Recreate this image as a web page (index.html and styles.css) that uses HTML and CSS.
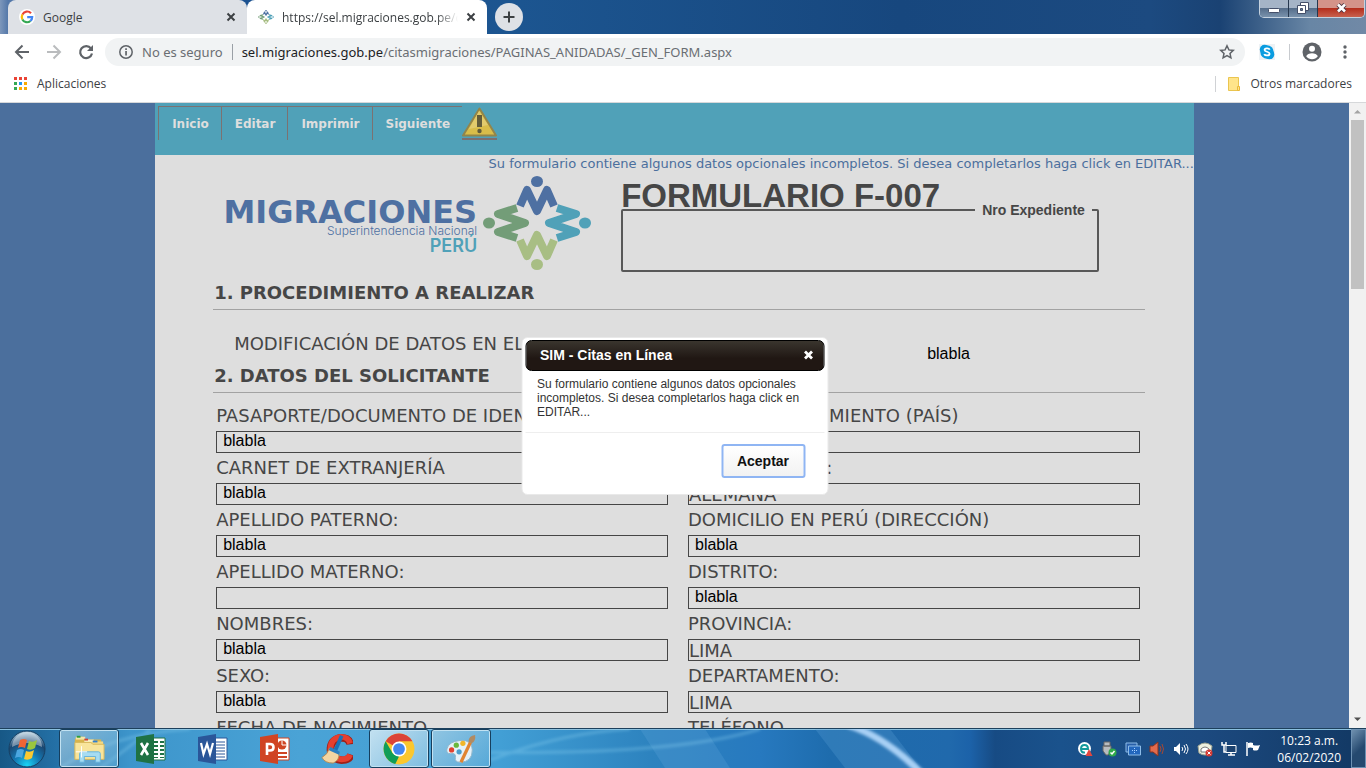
FILE: index.html
```html
<!DOCTYPE html>
<html lang="es">
<head>
<meta charset="utf-8">
<title>SIM - Citas en Línea</title>
<link rel="stylesheet" href="styles.css">
</head>
<body>
<header class="browser">
  <div class="tabstrip">
    <div class="tab">
      <svg class="favicon" viewBox="0 0 16 16"><circle cx="8" cy="8" r="8" fill="#fff"/><g fill="none" stroke-width="2.2"><path d="M12 4.2A5.2 5.2 0 0 0 3.4 5.6" stroke="#ea4335"/><path d="M3.4 5.6a5.2 5.2 0 0 0 0 4.8" stroke="#fbbc05"/><path d="M3.4 10.4a5.2 5.2 0 0 0 8 1.6" stroke="#34a853"/><path d="M11.4 12a5 5 0 0 0 1.8-3.9H8.2" stroke="#4285f4"/></g></svg>
      <span class="tab-title">Google</span>
      <button class="tab-close" aria-label="Cerrar pestaña"><svg viewBox="0 0 10 10"><path d="M1.5 1.5l7 7M8.500 1.500l-7 7"/></svg></button>
    </div>
    <div class="tab active">
      <svg class="favicon" viewBox="0 0 108 94"><use href="#emblem"/></svg>
      <span class="tab-title fade">https://sel.migraciones.gob.pe/citas</span>
      <button class="tab-close" aria-label="Cerrar pestaña"><svg viewBox="0 0 10 10"><path d="M1.5 1.5l7 7M8.500 1.500l-7 7"/></svg></button>
    </div>
    <button class="new-tab" aria-label="Nueva pestaña"><svg viewBox="0 0 14 14"><path d="M7 1.500v11M1.500 7h11" stroke="#3c4043" stroke-width="2"/></svg></button>
    <div class="window-controls">
      <button aria-label="Minimizar"><svg viewBox="0 0 28 18"><rect x="8.500" y="8.500" width="11" height="4" rx="1" fill="#fff" stroke="#45506a"/></svg></button>
      <button aria-label="Restaurar"><svg viewBox="0 0 28 18"><g fill="#fff" stroke="#45506a"><path d="M11.500 2.500h8v8h-8z"/><path d="M8.500 5.500h8v8h-8z"/><path d="M11.500 8.500h2v2h-2z" fill="#68819b"/></g></svg></button>
      <button class="close" aria-label="Cerrar"><svg viewBox="0 0 46 18"><path d="M20 4.500l7 7M27 4.500l-7 7" stroke="#4a3440" stroke-width="4.500"/><path d="M20 4.500l7 7M27 4.500l-7 7" stroke="#fff" stroke-width="2.600"/></svg></button>
    </div>
  </div>
  <div class="toolbar">
    <button class="nav" aria-label="Atrás"><svg viewBox="0 0 16 16"><path d="M15 8H2.500M8.500 1.500L2 8l6.500 6.500" fill="none" stroke="#5f6368" stroke-width="2"/></svg></button>
    <button class="nav" aria-label="Adelante"><svg viewBox="0 0 16 16"><path d="M1 8h12.500M7.500 1.500L14 8l-6.500 6.500" fill="none" stroke="#babcbe" stroke-width="2"/></svg></button>
    <button class="nav" aria-label="Recargar"><svg viewBox="0 0 16 16"><path d="M13 4.500A6 6 0 1 0 14 9.500" fill="none" stroke="#5f6368" stroke-width="2.200"/><path d="M15 1v6H9z" fill="#5f6368"/></svg></button>
    <div class="omnibox">
      <svg class="i16" viewBox="0 0 16 16"><circle cx="8" cy="8" r="6.200" fill="none" stroke="#5f6368" stroke-width="1.500"/><path d="M7.200 7h1.700v4.500H7.200zM7.200 4.300h1.700V6H7.200z" fill="#5f6368"/></svg>
      <span class="secure">No es seguro</span>
      <span class="url" role="textbox" aria-label="Dirección"><b>sel.migraciones.gob.pe</b>/citasmigraciones/PAGINAS_ANIDADAS/_GEN_FORM.aspx</span>
      <button class="star" aria-label="Añadir a marcadores"><svg class="i16" viewBox="0 0 16 16"><path d="M8 1.800l1.900 4.100 4.400.5-3.300 3 .9 4.400L8 11.600l-3.900 2.200.9-4.400-3.300-3 4.400-.5z" fill="none" stroke="#5f6368" stroke-width="1.500"/></svg></button>
    </div>
    <button class="skype" aria-label="Skype"><svg class="i16" viewBox="0 0 16 16"><path d="M0 0h16v16H0z" fill="#eef2f5"/><circle cx="5.500" cy="5.500" r="4.700" fill="#0a9ce0"/><circle cx="10.500" cy="10.500" r="4.800" fill="#0a9ce0"/><circle cx="8" cy="8" r="6.700" fill="#0a9ce0"/><path d="M10.800 5.600C9.800 3.700 5.500 4 5.600 6c.1 2.200 5 1.300 5 3.700 0 2.200-4.500 2.300-5.400.4" fill="none" stroke="#fff" stroke-width="1.800"/></svg></button>
    <i class="divider"></i>
    <button class="profile" aria-label="Perfil"><svg viewBox="0 0 20 20"><circle cx="10" cy="10" r="9.500" fill="#5f6368"/><circle cx="10" cy="6.700" r="3" fill="#fff"/><path d="M4.200 14.200c1.300-4 10.300-4 11.600 0-2.500 4-9 4-11.600 0z" fill="#fff"/></svg></button>
    <button class="more" aria-label="Menú"><svg viewBox="0 0 4 14"><g fill="#5f6368"><circle cx="2" cy="2" r="1.700"/><circle cx="2" cy="7" r="1.700"/><circle cx="2" cy="12" r="1.700"/></g></svg></button>
  </div>
  <nav class="bookmarks">
    <a href="#"><svg class="apps" viewBox="0 0 13 13"><path d="M0 0h3v3H0zM5 0h3v3H5zM10 0h3v3h-3z" fill="#ea4335"/><path d="M0 5h3v3H0zM0 10h3v3H0z" fill="#34a853"/><path d="M5 5h3v3H5z" fill="#2196f3"/><path d="M10 5h3v3h-3zM5 10h3v3H5zM10 10h3v3h-3z" fill="#f9ab00"/></svg>Aplicaciones</a>
    <a href="#" class="others"><svg class="folder" viewBox="0 0 12 14"><path d="M.5.5h10v13H.5z" fill="#ffe48a" stroke="#eac54f"/><path d="M9.500 9.500h2v4h-2z" fill="#ffe48a" stroke="#eab83a"/></svg>Otros marcadores</a>
  </nav>
</header>

<main class="viewport">
  <div class="backdrop">
    <div class="page">
      <nav class="menu">
        <a href="#">Inicio</a><a href="#">Editar</a><a href="#">Imprimir</a><a href="#">Siguiente</a>
        <span class="warning"><svg viewBox="0 0 35 30"><path d="M17.500 1.500L34 28.500H1z" fill="#d9bd49" stroke="#92854a" stroke-width="2" stroke-linejoin="round"/><path d="M17 4l9 14L7 22z" fill="#e6d17d" opacity=".7"/><path d="M15 8h5v12h-5z" fill="#625c3a"/><circle cx="17.500" cy="24" r="2.200" fill="#625c3a"/></svg></span>
      </nav>
      <p class="notice">Su formulario contiene algunos datos opcionales incompletos. Si desea completarlos haga click en EDITAR...</p>
      <div class="sheet">
        <div class="masthead">
          <div class="brand">
            <strong>MIGRACIONES</strong>
            <span>Superintendencia Nacional</span>
            <em>PERÚ</em>
          </div>
          <svg class="emblem" viewBox="0 0 108 94">
            <g id="emblem">
              <g fill="none" stroke-width="8" stroke-linejoin="round">
                <path d="M37 30L44 14L54 35L64 14L71 30" stroke="#4e70a2"/>
                <path d="M37 64L44 80L54 59L64 80L71 64" stroke="#a8be84"/>
                <path d="M34 32L15 38L42 47L15 56L34 62" stroke="#739d78"/>
                <path d="M74 32L93 38L66 47L93 56L74 62" stroke="#50a1b8"/>
              </g>
              <ellipse cx="54" cy="5.500" rx="6" ry="5.500" fill="#4e70a2"/><ellipse cx="54" cy="88.500" rx="6" ry="5.500" fill="#a8be84"/><ellipse cx="6" cy="47" rx="6" ry="5.500" fill="#739d78"/><ellipse cx="102" cy="47" rx="6" ry="5.500" fill="#50a1b8"/>
            </g>
          </svg>
          <div class="form-id">
            <h1>FORMULARIO F-007</h1>
            <fieldset><legend>Nro Expediente</legend></fieldset>
          </div>
        </div>
        <h2>1. PROCEDIMIENTO A REALIZAR</h2>
        <div class="procedure"><span>MODIFICACIÓN DE DATOS EN EL RCE</span><span class="reason">blabla</span></div>
        <h2>2. DATOS DEL SOLICITANTE</h2>
        <form class="fields">
          <label>PASAPORTE/DOCUMENTO DE IDENTIDAD<input value="blabla"></label>
          <label>LUGAR DE NACIMIENTO (PAÍS)<input value=""></label>
          <label>CARNET DE EXTRANJERÍA<input value="blabla"></label>
          <label>NACIONALIDAD:<input class="fixed" value="ALEMANA"></label>
          <label>APELLIDO PATERNO:<input value="blabla"></label>
          <label>DOMICILIO EN PERÚ (DIRECCIÓN)<input value="blabla"></label>
          <label>APELLIDO MATERNO:<input value=""></label>
          <label>DISTRITO:<input value="blabla"></label>
          <label>NOMBRES:<input value="blabla"></label>
          <label>PROVINCIA:<input class="fixed" value="LIMA"></label>
          <label>SEXO:<input value="blabla"></label>
          <label>DEPARTAMENTO:<input class="fixed" value="LIMA"></label>
          <label>FECHA DE NACIMIENTO<input value=""></label>
          <label>TELÉFONO<input value=""></label>
        </form>
      </div>
    </div>
    <section class="dialog" role="dialog" aria-labelledby="dialog-title">
      <div class="dialog-head"><span id="dialog-title">SIM - Citas en Línea</span><button aria-label="Cerrar"><svg viewBox="0 0 10 10"><path d="M1.500 1.500l7 7M8.500 1.500l-7 7" stroke="#fff" stroke-width="2.800"/></svg></button></div>
      <p>Su formulario contiene algunos datos opcionales incompletos. Si desea completarlos haga click en EDITAR...</p>
      <div class="dialog-foot"><button>Aceptar</button></div>
    </section>
  </div>
  <div class="scrollbar">
    <svg viewBox="0 0 17 17"><path d="M5 10.500h7L8.500 7z" fill="#a3a3a3"/></svg>
    <div class="thumb"></div>
    <svg viewBox="0 0 17 17"><path d="M5 6.500h7L8.500 10z" fill="#505050"/></svg>
  </div>
</main>

<footer class="taskbar">
  <svg class="wallpaper" viewBox="0 0 1366 40" preserveAspectRatio="none">
    <defs><filter id="soft"><feGaussianBlur stdDeviation="1.500"/></filter></defs>
    <path d="M640 0h65l25 40h-65zM815 0h75l30 40h-75z" fill="#62a8dd" opacity=".25"/>
    <path d="M490 32Q560 4 630 0M490 24Q680 26 760 0M60 40Q110 5 190 0M100 40Q135 15 150 0" fill="none" stroke="#8bd0f0" stroke-width="3" opacity=".35" filter="url(#soft)"/>
    <path d="M848-4Q885 8 922 46" fill="none" stroke="#a8d0f5" stroke-width="7" filter="url(#soft)"/>
  </svg>
  <button class="start" aria-label="Inicio"><svg viewBox="0 0 38 38"><defs><radialGradient id="orb" cx=".5" cy=".95" r=".9"><stop offset="0" stop-color="#18d5f5"/><stop offset=".4" stop-color="#1479b4"/><stop offset=".75" stop-color="#1b4771"/><stop offset="1" stop-color="#9cbbd0"/></radialGradient></defs><circle cx="19" cy="19" r="18" fill="url(#orb)" stroke="#173f62"/><path d="M4 17a15 15 0 0 1 30 0q-15-8-30 0z" fill="#fff" opacity=".4"/><path d="M12 10q4-2 7 0l-2 8q-4-2-7 0z" fill="#ee6534"/><path d="M21 11q4 2 8-1l-2 8q-4 3-8 1z" fill="#9ac63e"/><path d="M9 20q4-2 7 0l-2 8q-3-2-7 0z" fill="#4ba7e0"/><path d="M18 21q4 2 8-1l-2 8q-4 3-8 1z" fill="#fbc931"/></svg></button>
  <button class="task open" aria-label="Explorador"><svg viewBox="0 0 34 34"><path d="M2 7l2-3h7l1 3h18v20H2z" fill="#d9b44c"/><path d="M3 4h10v3H3z" fill="#f3e5a6"/><path d="M4 3h4v2H4z" fill="#2e9e3d"/><path d="M12 7h10v3H12z" fill="#faf0c0"/><path d="M12 6h4v2h-4z" fill="#d23f32"/><path d="M20 9h12v18H20z" fill="#f3d983"/><path d="M21 8h5v2h-5z" fill="#2f7fd2"/><path d="M2 10h17l2 2h12v16H2z" fill="#f8e49b" stroke="#d8b85a"/><path d="M7 31v-9q0-2 2-2h18q2 0 2 2v9h-5v-6H12v6z" fill="#a6dcf2" stroke="#63b1dc"/><path d="M9 14v12M3 20h12" stroke="#fff"/></svg></button>
  <button class="task" aria-label="Excel"><svg viewBox="0 0 32 32"><path d="M17 5h13v22H17z" fill="#fff" stroke="#1f7244"/><path d="M19 8h4v2h-4zM25 8h4v2h-4zM19 12h4v2h-4zM25 12h4v2h-4zM19 16h4v2h-4zM25 16h4v2h-4zM19 20h4v2h-4zM25 20h4v2h-4zM19 24h4v1h-4zM25 24h4v1h-4z" fill="#1f7244"/><path d="M1 4l18-3v30L1 28z" fill="#1f7244"/><path d="M6 10l7 12M13 10L6 22" stroke="#fff" stroke-width="2.600"/></svg></button>
  <button class="task" aria-label="Word"><svg viewBox="0 0 32 32"><path d="M17 5h13v22H17z" fill="#fff" stroke="#2a5699"/><path d="M19 9h9M19 12h9M19 15h9M19 18h9M19 21h9M19 24h9" stroke="#2a5699"/><path d="M1 4l18-3v30L1 28z" fill="#2a5699"/><path d="M4 10l2.500 11L10 11l3 10 3-11" fill="none" stroke="#fff" stroke-width="2.200"/></svg></button>
  <button class="task" aria-label="PowerPoint"><svg viewBox="0 0 32 32"><path d="M17 5h13v22H17z" fill="#fff" stroke="#d04423"/><circle cx="23" cy="12" r="4.500" fill="#d04423"/><path d="M23 12V7.500M23 12h5" stroke="#fff"/><path d="M19 20h9M19 24h9" stroke="#d04423" stroke-width="2"/><path d="M1 4l18-3v30L1 28z" fill="#d04423"/><path d="M8 22V11h3q3.500 0 3.500 3.200T11 17.500H8" fill="none" stroke="#fff" stroke-width="2.600"/></svg></button>
  <button class="task" aria-label="CCleaner"><svg viewBox="0 0 34 34"><path d="M31 12Q30 5 21 5 10 7 10 18q1 10 12 11 8 0 10-6" fill="none" stroke="#9e2119" stroke-width="8"/><path d="M31 11Q29 4 21 4 10 6 10 17q1 10 12 11 7 0 9-5" fill="none" stroke="#e63f2f" stroke-width="6"/><path d="M22 3l-7 16" stroke="#1971b8" stroke-width="4"/><path d="M9 16l10 5q1 8-6 11Q4 32 1 26q6-3 8-10z" fill="#f3d5a2" stroke="#b88a50"/><path d="M10 15l10 5-1 3-11-5z" fill="#2d7fc0"/></svg></button>
  <button class="task open current" aria-label="Chrome"><svg viewBox="0 0 30 30"><circle cx="15" cy="15" r="14.500" fill="#fbc72e"/><path d="M15 15L2.500 7.700A14.500 14.500 0 0 1 27.600 7.700H15z" fill="#db4437"/><path d="M2.500 7.700L9 19l6 3-3.500 7A14.500 14.500 0 0 1 2.500 7.700z" fill="#109d58"/><circle cx="15" cy="15" r="7" fill="#fff"/><circle cx="15" cy="15" r="5.500" fill="#4487f0"/></svg></button>
  <button class="task open" aria-label="Paint"><svg viewBox="0 0 34 34"><path d="M16 8q13-1 13 10 0 13-13 13-6 0-5-5t-5-4q-5 0-4-5 2-8 14-9z" fill="#e5f1f8" stroke="#8fb4c9"/><circle cx="7" cy="18" r="2.800" fill="#e2412f"/><circle cx="12" cy="13" r="2.800" fill="#69b83d"/><circle cx="19" cy="11" r="2.800" fill="#f1b629"/><circle cx="15" cy="20" r="2.800" fill="#4a9dcb"/><path d="M27 10L17 31" stroke="#e28430" stroke-width="3.500"/><path d="M25 9q0-6 7-7 1 7-4 9z" fill="#b18b63"/></svg></button>
  <div class="tray">
    <svg viewBox="0 0 16 16"><circle cx="7.500" cy="7.500" r="6.500" fill="#fff"/><path d="M4 8h7q0-4-3.500-4T4 8t4 3.500" fill="none" stroke="#159a9c" stroke-width="2"/><path d="M12 8l3.500 7h-7z" fill="#e5453d"/></svg>
    <svg viewBox="0 0 16 16"><path d="M3 1h6v4H3zM2 5h8v5l-3 4H5l-3-4z" fill="#b8bcc0" stroke="#666"/><circle cx="11.500" cy="11.500" r="4" fill="#2fa84a"/><path d="M9.500 11.500l1.500 1.500 2.500-3" fill="none" stroke="#fff" stroke-width="1.500"/></svg>
    <svg viewBox="0 0 16 16"><path d="M1 2h11v9H1z" fill="#285fa8" stroke="#8dbce8"/><path d="M3.500 5h12v9h-12z" fill="#2367bd" stroke="#8dbce8"/><path d="M7 9.500h5M9.500 7v5" stroke="#a9d0ff" stroke-dasharray="1 1"/></svg>
    <svg viewBox="0 0 16 16"><path d="M1 5h3l5-4v14L4 11H1z" fill="#e26b4d" stroke="#8b321f"/><path d="M11 5q2 3 0 6M13 3q3 5 0 10" fill="none" stroke="#a64733"/></svg>
    <svg viewBox="0 0 16 16"><path d="M1 6h2l4-4v12l-4-4H1z" fill="#fff"/><path d="M9 6q1.500 2 0 4M11 4q3 4 0 8M13 3q4 5 0 10" fill="none" stroke="#fff"/></svg>
    <svg viewBox="0 0 16 16"><path d="M1 5q7-6 14 0l-1 7q-6 4-12 0z" fill="#eef0df" stroke="#9da391"/><path d="M4 8q4-4 8 0v3H4z" fill="#fff" stroke="#777"/><circle cx="12" cy="12" r="3.500" fill="#d53a34"/><path d="M10.500 10.500l3 3M13.500 10.500l-3 3" stroke="#fff"/></svg>
    <svg viewBox="0 0 16 16"><path d="M5 4.500h10v7H5z" fill="#1c426f" stroke="#fff"/><path d="M7 14h7M10 12v2M1 1v3h4V1M3 4v7h2" fill="none" stroke="#fff" stroke-width="1.500"/></svg>
    <svg viewBox="0 0 16 16"><path d="M2 1v14" stroke="#fff" stroke-width="1.500"/><path d="M3 2q3-1 5 0v2q3 1 7 0l-2 5q-3 1-5 0V7q-3-1-5 0z" fill="#fff"/></svg>
  </div>
  <time class="clock"><span>10:23 a.m.</span><span>06/02/2020</span></time>
  <button class="peek" aria-label="Mostrar escritorio"></button>
</footer>
</body>
</html>
```
FILE: styles.css
```css
* { box-sizing: border-box; }
body {
  margin: 0;
  height: 100vh;
  display: flex;
  flex-direction: column;
  overflow: hidden;
  font-family: "Open Sans", "Noto Sans", sans-serif;
  font-size: 12px;
  color: #3c4043;
}
button { border: 0; padding: 0; background: none; font: inherit; color: inherit; }
svg { display: block; flex: none; }
a { color: inherit; text-decoration: none; }
p, h1, h2 { margin: 0; }

/* Browser frame */
.tabstrip {
  display: flex;
  align-items: center;
  height: 34px;
  padding-left: 8px;
  background: linear-gradient(90deg, #7d97bb 0, #5478a9 8px, #1b5190 240px, #1c5590 520px, #17477e 900px, #1c4a80 1150px, #1a4273 1220px, #6886a5 1310px, #7189a6 100%);
}
.tab {
  display: flex;
  align-items: center;
  width: 239px;
  height: 34px;
  padding: 0 11px 0 11px;
  gap: 8px;
  border-radius: 8px 8px 0 0;
  background: #dee1e6;
}
.tab.active { width: 240px; background: #fff; }
.favicon { width: 16px; height: 16px; }
.tab-title { flex: 1; overflow: hidden; white-space: nowrap; }
.fade { -webkit-mask-image: linear-gradient(90deg, #000 88%, transparent); mask-image: linear-gradient(90deg, #000 88%, transparent); }
.tab-close svg { width: 10px; height: 10px; stroke: #3c4043; stroke-width: 2; }
.new-tab {
  display: grid;
  place-items: center;
  width: 28px;
  height: 28px;
  margin-left: 8px;
  border-radius: 50%;
  background: #dee1e6;
}
.new-tab svg { width: 14px; }
.window-controls {
  display: flex;
  align-self: flex-start;
  height: 18px;
  margin: 0 1px 0 auto;
  border: 1px solid #c5d2df;
  border-top: 0;
  border-radius: 0 0 5px 5px;
  overflow: hidden;
}
.window-controls button { border-right: 1px solid #26384f; background: linear-gradient(#a5b4c7 50%, #566e8b 50%, #7992ac); }
.window-controls svg { height: 18px; }
.window-controls .close { border: 0; background: linear-gradient(#d49389 50%, #b52f1d 50%, #c8614e); }
.toolbar { display: flex; align-items: center; height: 36px; padding: 0 19px 0 14px; background: #fff; }
.nav { margin-right: 16px; }
.nav svg { width: 16px; }
.omnibox {
  display: flex;
  align-items: center;
  flex: 1;
  height: 28px;
  margin-left: -5px;
  padding: 0 10px 0 13px;
  border-radius: 14px;
  background: #f1f3f4;
  font-family: "Noto Sans", sans-serif;
  font-size: 13px;
  color: #6a6e73;
}
.i16 { width: 16px; height: 16px; }
.secure { margin-left: 8px; padding-right: 9px; border-right: 1px solid #9aa0a6; line-height: 16px; }
.url { margin-left: 9px; white-space: nowrap; }
.url b { font-weight: 400; color: #202124; }
.star { margin-left: auto; }
.skype { margin-left: 14px; }
.divider { width: 1px; height: 16px; margin: 0 12px 0 14px; background: #c8cbcf; }
.profile svg { width: 20px; }
.more { margin-left: 21px; }
.more svg { width: 4px; }
.bookmarks {
  display: flex;
  justify-content: space-between;
  align-items: center;
  height: 33px;
  padding: 0 14px 5px;
  border-bottom: 1px solid #d6d8da;
  background: #fff;
}
.bookmarks a { display: flex; align-items: center; gap: 10px; }
.apps { width: 13px; }
.folder { width: 12px; }
.others { padding-left: 12px; border-left: 1px solid #d0d2d5; line-height: 16px; }

/* Page */
.viewport { flex: 1; min-height: 0; display: flex; overflow: hidden; }
.backdrop { flex: 1; position: relative; overflow: hidden; background: #4b6f9d; }
.page {
  width: 77%;
  margin: 0 auto;
  background: #dedede;
  font-family: "DejaVu Sans", Verdana, sans-serif;
  font-size: 18px;
  color: #464646;
}
.menu {
  display: flex;
  height: 52px;
  padding: 3px;
  background: #50a1b8;
  font-size: 12px;
  font-weight: 700;
  line-height: 34px;
  color: #dedede;
}
.menu a { height: 34px; padding: 0 12px 0 13px; border: solid #7b7272; border-width: 1px 0 0 1px; }
.warning { align-self: flex-start; padding: 1px 0; border-bottom: 2px solid #7b6f6f; }
.warning svg { width: 35px; }
.notice { font-size: 13px; line-height: 18px; text-align: right; white-space: nowrap; color: #4b6f9d; }
.sheet { padding: 3px 49px 20px 58px; }
.masthead { display: flex; height: 104px; padding: 0 46px 0 9px; }
.brand { display: flex; flex-direction: column; align-items: flex-end; width: 255px; margin-right: 6px; padding-top: 24px; color: #4e70a2; }
.brand strong { font-size: 32px; line-height: 25px; }
.brand span { font: 300 12px/12px Inter, sans-serif; }
.brand em { font: 600 18px/18px Inter, sans-serif; color: #50a1b8; }
.emblem { width: 108px; height: 94px; }
.form-id { flex: 1; margin-left: 30px; font-family: "Liberation Sans", Arial, sans-serif; }
h1 { padding-top: 4px; font-size: 33px; line-height: 32px; height: 27px; }
fieldset { height: 69px; margin: 0; padding: 0; border: 2px solid #585858; border-radius: 2px; }
legend { margin: 0 5px 0 auto; padding: 0 7px; font-size: 14px; line-height: 14px; font-weight: 700; }
h2 { height: 30px; padding: 0 1px; border-bottom: 1px solid #a2a2a2; font-size: 18px; line-height: 26px; }
.procedure { display: flex; justify-content: space-between; height: 53px; padding: 23px 175px 0 21px; line-height: 22px; }
.reason { padding-top: 10px; font: 16px/22px "Liberation Sans", Arial, sans-serif; color: #000; }
.fields { display: grid; grid-template-columns: 1fr 1fr; gap: 0 20px; padding: 8px 5px 0 3px; }
.fields label { display: block; line-height: 30px; white-space: nowrap; }
.fields input {
  display: block;
  width: 100%;
  height: 22px;
  padding: 0 6px 2px;
  border: 1px solid #464646;
  background: none;
  font: 16px "Liberation Sans", Arial, sans-serif;
  color: #000;
}
.fields .fixed { padding: 0; font: 18px "DejaVu Sans", Verdana, sans-serif; color: #464646; }

/* Dialog over the page */
.dialog {
  position: absolute;
  top: 50%;
  left: 50%;
  transform: translate(-50%, -50%);
  width: 307px;
  padding: 2px 3px 3px;
  border: 1px solid #e9e9e9;
  border-radius: 6px;
  background: #fff;
  font-family: "Liberation Sans", Arial, sans-serif;
  color: #333;
}
.dialog-head {
  display: flex;
  justify-content: space-between;
  align-items: center;
  height: 31px;
  padding: 0 10px 0 14px;
  border: 1px solid #000;
  border-radius: 6px;
  background: linear-gradient(#3a352e, #201713 60%);
  font-size: 14px;
  font-weight: 700;
  color: #fff;
}
.dialog-head svg { width: 10px; }
.dialog p { padding: 6px 12px 13px; font-size: 12px; line-height: 14px; }
.dialog-foot { display: flex; justify-content: flex-end; padding: 11px 19px 13px; border-top: 1px solid #eee; }
.dialog-foot button {
  width: 84px;
  height: 34px;
  border: 2px solid #8fb5f3;
  border-radius: 3px;
  background: linear-gradient(#fff, #f2f2f2);
  font-size: 14px;
  font-weight: 700;
  color: #111;
}
.scrollbar { display: flex; flex-direction: column; width: 17px; background: #f1f1f1; }
.scrollbar svg { width: 17px; }
.thumb { height: 169px; margin: 0 2px auto; background: #c1c1c1; }

/* Taskbar */
.taskbar {
  position: relative;
  display: flex;
  align-items: center;
  height: 40px;
  border-top: 1px solid #1d405c;
  box-shadow: inset 0 1px #8bc1df;
  background: linear-gradient(90deg, #175886 0, #2572a8 60px, #3d95cb 130px, #4aa3d6 300px, #429fd5 500px, #2d83bf 650px, #2779bf 760px, #1e6cad 830px, #2069ac 950px, #1c62a9 970px, #174b84 995px, #1a528c 1060px, #1c4a80 1200px, #123863 100%);
}
.wallpaper { position: absolute; inset: 0; width: 100%; height: 100%; }
.taskbar > :not(.wallpaper) { position: relative; }
.start { margin: 0 12px 0 7px; }
.start svg { width: 40px; height: 38px; }
.task { display: grid; place-items: center; width: 60px; height: 39px; margin-right: 2px; border: 1px solid transparent; border-radius: 3px; }
.task svg { width: 32px; height: 32px; }
.open { border-color: #163f5e; box-shadow: inset 0 0 0 1px #c2e2f2; background: linear-gradient(135deg, #b7d8e9aa, #73b6dc66); }
.current { background: linear-gradient(135deg, #e1f0f7cc, #9acbe6aa); }
.tray { display: flex; gap: 8px; margin-left: auto; }
.tray svg { width: 16px; height: 16px; }
.clock { display: flex; flex-direction: column; align-items: center; margin: 0 10px 0 16px; font-family: "Open Sans", sans-serif; font-size: 12px; line-height: 17px; color: #fff; }
.peek { width: 15px; height: 39px; border: 1px solid #6d91b3; background: linear-gradient(135deg, #6f90af, #25496f 55%); }
```
